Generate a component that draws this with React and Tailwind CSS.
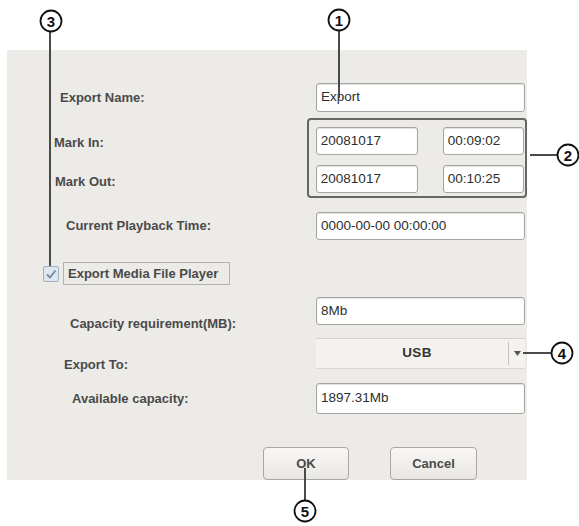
import React, { useState } from "react";

const font = "font-['Liberation_Sans',Arial,sans-serif]";

function Field({ value, className = "" }) {
  return (
    <div
      className={`flex items-center bg-white border border-[#a6a5a2] rounded-[3px] shadow-[inset_0_1px_1px_rgba(0,0,0,0.12)] px-[4px] text-[13.5px] text-[#2e2e2e] ${className}`}
    >
      {value}
    </div>
  );
}

function Label({ children, indent, className = "" }) {
  return (
    <div
      className={`text-[13px] font-bold text-[#4a4a4a] leading-4 whitespace-nowrap ${className}`}
      style={{ marginLeft: indent }}
    >
      {children}
    </div>
  );
}

function Callouts() {
  return (
    <svg
      className="absolute inset-0 pointer-events-none"
      width="579"
      height="526"
      viewBox="0 0 579 526"
    >
      <g stroke="#4a4a4a" strokeWidth="2" fill="none">
        <line x1="50" y1="31" x2="50" y2="266" />
        <line x1="339" y1="30" x2="339" y2="98" />
        <line x1="530" y1="155" x2="558" y2="155" />
        <line x1="523" y1="353" x2="552" y2="353" />
        <line x1="305" y1="468" x2="305" y2="500" />
      </g>
      <g stroke="#111" strokeWidth="1.8" fill="white">
        <circle cx="51" cy="21" r="10.5" />
        <circle cx="339" cy="20" r="10.5" />
        <circle cx="568" cy="155" r="10.5" />
        <circle cx="562" cy="353" r="10.5" />
        <circle cx="305" cy="511" r="10.5" />
      </g>
      <g
        fontFamily="Liberation Sans, Arial, sans-serif"
        fontWeight="bold"
        fontSize="15"
        fill="#111"
        textAnchor="middle"
      >
        <text x="51" y="26.5">3</text>
        <text x="339" y="25.5">1</text>
        <text x="568" y="160.5">2</text>
        <text x="562" y="358.5">4</text>
        <text x="305" y="516.5">5</text>
      </g>
    </svg>
  );
}

export default function App() {
  const [playerChecked, setPlayerChecked] = useState(true);

  return (
    <div className={`relative w-[579px] h-[526px] bg-white pt-[50px] pl-[7px] ${font}`}>
      <div className="w-[520px] h-[430px] bg-[#ecebe7] flex flex-col pt-[33px]">
        {/* export name */}
        <div className="flex items-center h-[29px]">
          <Label indent={53} className="w-[256px]">Export Name:</Label>
          <Field value="Export" className="w-[209px] h-[29px]" />
        </div>

        {/* mark in / out */}
        <div className="flex mt-[6px]">
          <div className="w-[301px] flex flex-col pt-[17px] gap-[23px]">
            <Label indent={47}>Mark In:</Label>
            <Label indent={48}>Mark Out:</Label>
          </div>
          <div className="w-[221px] h-[80px] border-2 border-[#666] rounded-[4px] pl-[7px] pt-[7px] flex flex-col gap-[10px]">
            <div className="flex gap-[25px]">
              <Field value="20081017" className="w-[102px] h-[28px]" />
              <Field value="00:09:02" className="w-[81px] h-[28px]" />
            </div>
            <div className="flex gap-[25px]">
              <Field value="20081017" className="w-[102px] h-[28px]" />
              <Field value="00:10:25" className="w-[81px] h-[28px]" />
            </div>
          </div>
        </div>

        {/* playback time */}
        <div className="flex items-center h-[28px] mt-[14px]">
          <Label indent={59} className="w-[250px]">Current Playback Time:</Label>
          <Field value="0000-00-00 00:00:00" className="w-[209px] h-[28px]" />
        </div>

        {/* media player checkbox */}
        <div className="flex items-center h-[23px] mt-[22px] pl-[36px]">
          <button
            onClick={() => setPlayerChecked(!playerChecked)}
            className="w-[16px] h-[16px] border border-[#a3b0bf] bg-[#dde5ee] rounded-[2px] flex items-center justify-center"
          >
            {playerChecked && (
              <svg width="12" height="12" viewBox="0 0 12 12">
                <path d="M2 6.5 L5 9.5 L10.5 2.5" stroke="#7189a5" strokeWidth="1.8" fill="none" />
              </svg>
            )}
          </button>
          <div className="ml-[4px] h-[23px] w-[167px] border border-[#b3b2ae] flex items-center pl-[4px] text-[13px] font-bold text-[#4a4a4a]">
            Export Media File Player
          </div>
        </div>

        {/* capacity requirement */}
        <div className="flex items-start h-[28px] mt-[12px]">
          <Label indent={63} className="w-[246px] mt-[19px]">Capacity requirement(MB):</Label>
          <Field value="8Mb" className="w-[209px] h-[28px]" />
        </div>

        {/* export target */}
        <div className="flex items-start h-[30px] mt-[13px]">
          <Label indent={57} className="w-[252px] mt-[19px]">Export To:</Label>
          <div className="w-[209px] h-[30px] flex bg-[#f3f2ef] border-t border-[#d2d1cd] shadow-[0_1px_0_#d8d7d3]">
            <div className="flex-1 flex items-center justify-center text-[13.5px] font-bold text-[#333] tracking-wide pl-[10px]">
              USB
            </div>
            <div className="w-[17px] border-l border-[#c6c5c1] my-[3px] flex items-center justify-center">
              <svg width="7" height="5" viewBox="0 0 7 5">
                <path d="M0 0 H7 L3.5 5 Z" fill="#555" />
              </svg>
            </div>
          </div>
        </div>

        {/* available capacity */}
        <div className="flex items-center h-[31px] mt-[15px]">
          <Label indent={65} className="w-[244px]">Available capacity:</Label>
          <Field value="1897.31Mb" className="w-[209px] h-[31px]" />
        </div>

        {/* actions */}
        <div className="flex mt-[33px] pl-[256px] gap-[41px]">
          <button className="w-[86px] h-[33px] rounded-[4px] border border-[#a9a8a4] bg-gradient-to-b from-[#f8f7f5] to-[#e8e7e3] text-[13px] font-bold text-[#4a4a4a]">
            OK
          </button>
          <button className="w-[87px] h-[33px] rounded-[4px] border border-[#a9a8a4] bg-gradient-to-b from-[#f8f7f5] to-[#e8e7e3] text-[13px] font-bold text-[#4a4a4a]">
            Cancel
          </button>
        </div>
      </div>
      <Callouts />
    </div>
  );
}
